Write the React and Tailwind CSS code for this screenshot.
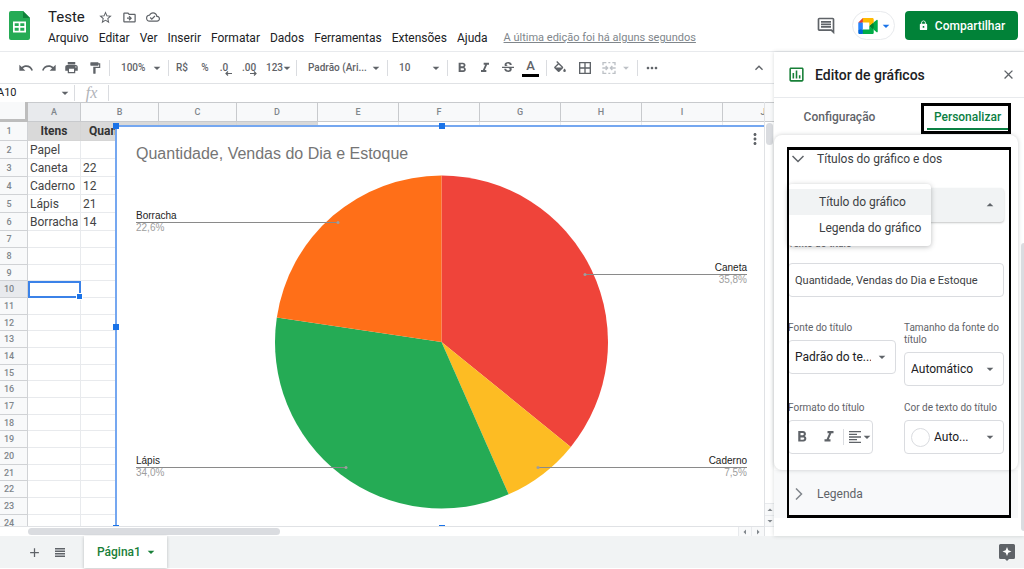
import {
  MdAdd,
  MdArrowDropDown,
  MdArrowDropUp,
  MdBorderAll,
  MdClose,
  MdExpandLess,
  MdFormatAlignLeft,
  MdFormatBold,
  MdFormatItalic,
  MdFormatPaint,
  MdLock,
  MdMoreHoriz,
  MdMoreVert,
  MdOutlineCloudDone,
  MdOutlineDriveFileMove,
  MdOutlineInsertChart,
  MdOutlineInsertComment,
  MdPrint,
  MdRedo,
  MdStarBorder,
  MdStrikethroughS,
  MdUndo,
} from 'react-icons/md'

const MENUS = ['Arquivo', 'Editar', 'Ver', 'Inserir', 'Formatar', 'Dados', 'Ferramentas', 'Extensões', 'Ajuda']

const COLUMNS = [
  { name: 'A', width: 'w-[53px]' },
  { name: 'B', width: 'w-[78px]' },
  { name: 'C', width: 'w-[78px]' },
  { name: 'D', width: 'w-[81px]' },
  { name: 'E', width: 'w-[81px]' },
  { name: 'F', width: 'w-[81px]' },
  { name: 'G', width: 'w-[81px]' },
  { name: 'H', width: 'w-[81px]' },
  { name: 'I', width: 'w-[81px]' },
  { name: 'J', width: 'w-[81px]' },
]

const CELLS = [
  ['Itens', 'Quantidade', '', ''],
  ['Papel', ''],
  ['Caneta', '22'],
  ['Caderno', '12'],
  ['Lápis', '21'],
  ['Borracha', '14'],
]

const ROWS = Array.from({ length: 24 }, (_, i) => i + 1)

const SLICES = [
  { name: 'Caneta', value: 19, color: '#ef443a' },
  { name: 'Caderno', value: 4, color: '#fdbc23' },
  { name: 'Lápis', value: 18, color: '#25ab55' },
  { name: 'Borracha', value: 12, color: '#ff6f18' },
]

const CALLOUTS = [
  { name: 'Borracha', percent: '22,6%', x: 21, y: 97, dot: 223, anchor: 'start' },
  { name: 'Caneta', percent: '35,8%', x: 632, y: 149, dot: 470, anchor: 'end' },
  { name: 'Lápis', percent: '34,0%', x: 21, y: 342, dot: 231, anchor: 'start' },
  { name: 'Caderno', percent: '7,5%', x: 632, y: 342, dot: 423, anchor: 'end' },
]

const CENTER = { x: 326.5, y: 217, r: 166.5 }

function rowHeight(row) {
  if (row === 1) return 'h-[19px]'
  if (row <= 6) return 'h-[18px]'
  return row % 3 === 0 ? 'h-[16px]' : 'h-[17px]'
}

function slicePaths() {
  const total = SLICES.reduce((sum, s) => sum + s.value, 0)
  const point = (t) => {
    const a = t * 2 * Math.PI
    return `${CENTER.x + CENTER.r * Math.sin(a)} ${CENTER.y - CENTER.r * Math.cos(a)}`
  }
  let start = 0
  return SLICES.map((s) => {
    const end = start + s.value / total
    const large = end - start > 0.5 ? 1 : 0
    const d = `M${CENTER.x} ${CENTER.y}L${point(start)}A${CENTER.r} ${CENTER.r} 0 ${large} 1 ${point(end)}Z`
    start = end
    return { ...s, d }
  })
}

function SheetsLogo() {
  return (
    <svg viewBox="0 0 21 29" className="h-[29px] w-[21px] shrink-0">
      <path d="M2 0h12l7 7v20a2 2 0 0 1-2 2H2a2 2 0 0 1-2-2V2a2 2 0 0 1 2-2z" fill="#25ab55" />
      <path d="M14 0l7 7h-7z" fill="#11823b" />
      <path
        d="M4 10.5h13v11H4zM5.7 12.2v2.9h4v-2.9zM11.3 12.2v2.9h4v-2.9zM5.7 16.8v2.9h4v-2.9zM11.3 16.8v2.9h4v-2.9z"
        fill="#fff"
        fillRule="evenodd"
      />
    </svg>
  )
}

function MeetLogo() {
  return (
    <svg viewBox="0 0 87.5 72" className="h-4 w-5">
      <path fill="#00832d" d="M49.5 36l8.53 9.75 11.47 7.33 2-17.02-2-16.64-11.69 6.44z" />
      <path fill="#0066da" d="M0 51.5V66c0 3.315 2.685 6 6 6h14.5l3-10.96-3-9.54-9.95-3z" />
      <path fill="#e94235" d="M20.5 0L0 20.5l10.55 3 9.95-3 2.95-9.41z" />
      <path fill="#2684fc" d="M20.5 20.5H0v31h20.5z" />
      <path
        fill="#00ac47"
        d="M82.6 8.68L69.5 19.42v33.66l13.16 10.79c1.97 1.54 4.85.135 4.85-2.37V11c0-2.535-2.945-3.925-4.91-2.32zM49.5 36v15.5h-29V72h43c3.315 0 6-2.685 6-6V53.08z"
      />
      <path fill="#ffba00" d="M63.5 0h-43v20.5h29V36l20-16.57V6c0-3.315-2.685-6-6-6z" />
    </svg>
  )
}

function FillIcon() {
  return (
    <svg viewBox="0 0 24 20" className="h-[13px] w-4" fill="currentColor">
      <path d="M16.56 8.94L7.62 0 6.21 1.41l2.38 2.38-5.15 5.15a1.49 1.49 0 0 0 0 2.12l5.5 5.5c.29.29.68.44 1.06.44s.77-.15 1.06-.44l5.5-5.5c.59-.58.59-1.53 0-2.12zM5.21 10L10 5.21 14.79 10H5.21zM19 11.5s-2 2.17-2 3.5a2 2 0 1 0 4 0c0-1.33-2-3.5-2-3.5z" />
    </svg>
  )
}

function MergeIcon() {
  return (
    <svg viewBox="0 0 24 24" className="size-4" fill="none" stroke="currentColor" strokeWidth="2">
      <path d="M3 8V4h5M11 4h3M17 4h4v4M3 16v4h5M11 20h3M17 20h4v-4M2 12h7M22 12h-7M7 9l3 3-3 3M17 9l-3 3 3 3" />
    </svg>
  )
}

function DecimalArrow({ flip }) {
  return (
    <svg viewBox="0 0 8 5" className="absolute -right-px -bottom-px h-[5px] w-2" stroke="currentColor" strokeWidth="1.2" fill="none">
      <path d={flip ? 'M1 2.5h6M5 .5l2 2-2 2' : 'M7 2.5H1M3 .5l-2 2 2 2'} />
    </svg>
  )
}

function Divider() {
  return <span className="h-4 w-px shrink-0 bg-[#dadce0]" />
}

function ToolButton({ label, width = 'w-[23px]', children }) {
  return (
    <button aria-label={label} className={`flex h-6 shrink-0 items-center justify-center ${width}`}>
      {children}
    </button>
  )
}

function ToolSelect({ label, value, width }) {
  return (
    <div className={`relative flex shrink-0 items-center ${width}`}>
      <select aria-label={label} className="w-full appearance-none pl-[11px] outline-none">
        <option>{value}</option>
      </select>
      <MdArrowDropDown className="pointer-events-none absolute right-[3px] size-4" />
    </div>
  )
}

function Header() {
  return (
    <header className="flex h-[52px] shrink-0 items-start border-b border-[#e8eaed] pl-[9px] pr-[6px] pt-[11px]">
      <SheetsLogo />
      <div className="-mt-[3px] ml-[18px]">
        <div className="flex h-[18px] items-center text-[#5f6368]">
          <h1 className="mr-[13px] text-[15px] leading-[18px] text-[#202124]">Teste</h1>
          <div className="flex gap-[9px]">
            <button aria-label="Marcar com estrela"><MdStarBorder className="size-[15px]" /></button>
            <button aria-label="Mover"><MdOutlineDriveFileMove className="size-[15px]" /></button>
            <button aria-label="Salvo no Drive"><MdOutlineCloudDone className="size-[14px]" /></button>
          </div>
        </div>
        <nav className="mt-1 flex gap-[10px] whitespace-nowrap text-[12px] leading-4 text-[#202124]">
          {MENUS.map((menu) => (
            <button key={menu}>{menu}</button>
          ))}
          <a href="#historico" className="ml-[6px] text-[11px] text-[#80868b] underline">
            A última edição foi há alguns segundos
          </a>
        </nav>
      </div>
      <div className="ml-auto flex h-[29px] items-center">
        <button aria-label="Comentários" className="mr-4 text-[#5f6368]">
          <MdOutlineInsertComment className="size-5" />
        </button>
        <button
          aria-label="Videochamada"
          className="mr-[10px] flex h-[29px] w-[43px] items-center justify-center rounded-full border border-[#e8eaed]"
        >
          <MeetLogo />
          <MdArrowDropDown className="-mr-1 size-4 text-[#1a73e8]" />
        </button>
        <button className="flex h-[29px] w-[113px] items-center justify-center gap-[6px] rounded bg-[#018238] text-[12px] font-medium text-white">
          <MdLock className="size-[11px]" />
          Compartilhar
        </button>
      </div>
    </header>
  )
}

function Toolbar() {
  return (
    <div className="flex h-8 shrink-0 items-center border-b border-[#e0e2e5] pl-[14px] text-[10px] font-medium text-[#5f6368]">
      <ToolButton label="Desfazer"><MdUndo className="size-4" /></ToolButton>
      <ToolButton label="Refazer"><MdRedo className="size-4" /></ToolButton>
      <ToolButton label="Imprimir"><MdPrint className="size-[15px]" /></ToolButton>
      <ToolButton label="Pintar formatação"><MdFormatPaint className="size-[14px]" /></ToolButton>
      <span className="w-[3px]" />
      <Divider />
      <ToolSelect label="Zoom" value="100%" width="w-[58px]" />
      <Divider />
      <ToolButton label="Moeda" width="w-[26px]">R$</ToolButton>
      <ToolButton label="Porcentagem" width="w-5">%</ToolButton>
      <ToolButton label="Diminuir casas decimais" width="w-[22px]">
        <span className="relative pr-1">.0<DecimalArrow /></span>
      </ToolButton>
      <ToolButton label="Aumentar casas decimais" width="w-6">
        <span className="relative">.00<DecimalArrow flip /></span>
      </ToolButton>
      <ToolButton label="Mais formatos" width="w-[35px]">
        123
        <MdArrowDropDown className="-mx-1 size-4" />
      </ToolButton>
      <Divider />
      <ToolSelect label="Fonte" value="Padrão (Ari..." width="w-[90px]" />
      <Divider />
      <ToolSelect label="Tamanho da fonte" value="10" width="w-[59px]" />
      <Divider />
      <span className="w-[2px]" />
      <ToolButton label="Negrito"><MdFormatBold className="size-4" /></ToolButton>
      <ToolButton label="Itálico"><MdFormatItalic className="size-4" /></ToolButton>
      <ToolButton label="Tachado"><MdStrikethroughS className="size-4" /></ToolButton>
      <ToolButton label="Cor do texto">
        <span className="w-[17px] border-b-[3px] border-black text-center text-[13px] leading-4">A</span>
      </ToolButton>
      <span className="w-1" />
      <Divider />
      <ToolButton label="Cor de preenchimento" width="w-[25px]"><FillIcon /></ToolButton>
      <ToolButton label="Bordas" width="w-[25px]"><MdBorderAll className="size-4" /></ToolButton>
      <button aria-label="Mesclar células" disabled className="flex w-9 shrink-0 items-center justify-between pl-1 text-[#bdc1c6]">
        <MergeIcon />
        <MdArrowDropDown className="size-[14px]" />
      </button>
      <span className="w-1" />
      <Divider />
      <ToolButton label="Mais" width="w-7"><MdMoreHoriz className="size-4" /></ToolButton>
      <button aria-label="Ocultar menus" className="ml-auto mr-[7px]"><MdExpandLess className="size-4" /></button>
    </div>
  )
}

function FormulaBar() {
  return (
    <div className="flex h-[18px] shrink-0 items-center">
      <div className="flex w-[74px] items-center">
        <input aria-label="Caixa de nome" defaultValue="A10" className="-ml-[3px] w-[60px] text-[11px] text-[#202124] outline-none" />
        <MdArrowDropDown className="size-4 text-[#5f6368]" />
      </div>
      <Divider />
      <label htmlFor="formula" className="w-[33px] text-center font-[Liberation_Serif,serif] text-[16px] leading-4 italic text-[#b0b3b8]">
        fx
      </label>
      <Divider />
      <input id="formula" className="min-w-0 flex-1 px-2 text-[11px] outline-none" />
    </div>
  )
}

function SheetTable() {
  return (
    <table className="w-[804px] table-fixed border-separate border-spacing-0 text-[12px] leading-4 text-[#444]">
      <thead>
        <tr className="h-5 text-[9px] leading-3 text-[#80868b]">
          <th className="w-7 border-r-[3px] border-b-[3px] border-[#bdbdbd] bg-[#f8f9fa] p-0" />
          {COLUMNS.map((col) => (
            <th
              key={col.name}
              className={`border-t border-r border-b border-[#c8cacd] p-0 font-medium ${col.width} ${col.name === 'A' ? 'bg-[#e8eaed]' : 'bg-[#f8f9fa]'}`}
            >
              {col.name}
            </th>
          ))}
        </tr>
      </thead>
      <tbody>
        {ROWS.map((row) => (
          <tr key={row} className={rowHeight(row)}>
            <th
              className={`border-r border-b border-[#d0d2d5] p-0 pr-[9px] text-center text-[9px] leading-3 font-medium text-[#80868b] ${row === 10 ? 'bg-[#e8eaed]' : 'bg-[#f8f9fa]'}`}
            >
              {row}
            </th>
            {COLUMNS.map((col, i) => {
              const text = CELLS[row - 1]?.[i]
              const selected = row === 10 && col.name === 'A'
              return (
                <td
                  key={col.name}
                  className={`overflow-visible border-r border-b p-0 whitespace-nowrap ${
                    row === 1 && i < 4
                      ? 'border-[#d5d5d5] bg-[#d9d9d9] px-2 text-center font-bold text-[#333]'
                      : 'border-[#e8eaed] px-[2px]'
                  } ${selected ? 'relative outline-2 -outline-offset-2 outline-[#3b82e8]' : ''}`}
                >
                  {text}
                  {selected && <span className="absolute -right-[2px] -bottom-[2px] size-[5px] bg-[#1a73e8] ring-1 ring-white" />}
                </td>
              )
            })}
          </tr>
        ))}
      </tbody>
    </table>
  )
}

function PieChart() {
  return (
    <div className="absolute top-[23px] left-[115px] h-[404px] w-[653px] border-2 border-[#75a7f0] bg-white">
      <svg viewBox="2 2 649 400" className="block h-full w-full" fontFamily="Liberation Sans, Arial, sans-serif">
        <text x="21" y="34" fontSize="16" fill="#757575">
          Quantidade, Vendas do Dia e Estoque
        </text>
        {slicePaths().map((s) => (
          <path key={s.name} d={s.d} fill={s.color} />
        ))}
        {CALLOUTS.map((c) => (
          <g key={c.name} fontSize="10" textAnchor={c.anchor}>
            <path d={`M${c.x} ${c.y + 0.5}H${c.dot}`} stroke="#8a8a8a" />
            <circle cx={c.dot} cy={c.y + 0.5} r="1.5" fill="#9e9e9e" />
            <text x={c.x} y={c.y - 3} fill="#222">{c.name}</text>
            <text x={c.x} y={c.y + 9} fill="#9e9e9e">{c.percent}</text>
          </g>
        ))}
      </svg>
      <button aria-label="Opções do gráfico" className="absolute top-[3px] right-[2px] text-[#5f6368]">
        <MdMoreVert className="size-[18px]" />
      </button>
      <span className="absolute -top-1 -left-1 size-[6px] bg-[#1a73e8]" />
      <span className="absolute -top-1 left-1/2 -ml-[3px] size-[6px] bg-[#1a73e8]" />
      <span className="absolute top-1/2 -left-1 -mt-[3px] size-[6px] bg-[#1a73e8]" />
      <span className="absolute -bottom-1 left-1/2 -ml-[3px] size-[6px] bg-[#1a73e8]" />
      <span className="absolute -bottom-1 -left-1 size-[6px] bg-[#1a73e8]" />
    </div>
  )
}

function Sheet() {
  return (
    <div className="flex min-h-0 flex-1">
      <div className="flex min-w-0 flex-1 flex-col">
        <div className="relative min-h-0 flex-1 overflow-hidden border-b border-[#e0e2e5]">
          <SheetTable />
          <PieChart />
        </div>
        <div className="flex h-[9px] shrink-0 items-center justify-between pl-7 text-[#80868b]">
          <span className="h-[7px] w-[252px] rounded-full bg-[#dadce0]" />
          <div className="flex h-full w-[26px]">
            <button aria-label="Rolar para a esquerda" className="flex flex-1 items-center justify-center border-l border-[#e8eaed] bg-[#f8f9fa]">
              <MdArrowDropDown className="size-3 rotate-90" />
            </button>
            <button aria-label="Rolar para a direita" className="flex flex-1 items-center justify-center border-l border-[#e8eaed] bg-[#f8f9fa]">
              <MdArrowDropDown className="size-3 -rotate-90" />
            </button>
          </div>
        </div>
      </div>
      <div className="flex w-[10px] shrink-0 flex-col border-l border-[#e0e2e5] pb-[9px] text-[#80868b]">
        <div className="h-5 border-t border-b border-[#c8cacd] bg-[#f8f9fa]" />
        <span className="mt-px ml-px h-[22px] w-[7px] rounded-full bg-[#dadce0]" />
        <button aria-label="Rolar para cima" className="mt-auto flex h-3 items-center justify-center border-t border-[#e8eaed] bg-[#f8f9fa]">
          <MdArrowDropUp className="size-3 shrink-0" />
        </button>
        <button aria-label="Rolar para baixo" className="flex h-3 items-center justify-center border-y border-[#e8eaed] bg-[#f8f9fa]">
          <MdArrowDropDown className="size-3 shrink-0" />
        </button>
      </div>
    </div>
  )
}

function FieldSelect({ id, label, value, swatch }) {
  return (
    <div>
      <label htmlFor={id} className="mb-[6px] block text-[10px] leading-3 text-[#5f6368]">
        {label}
      </label>
      <div className="relative flex h-[34px] items-center">
        <select
          id={id}
          className={`h-full w-full appearance-none rounded border border-[#dadce0] bg-white pr-6 text-[12px] text-[#202124] outline-none ${swatch ? 'pl-[29px]' : 'pl-[6px]'}`}
        >
          <option>{value}</option>
        </select>
        {swatch && <span className="pointer-events-none absolute left-[7px] size-[19px] rounded-full border border-[#dadce0]" />}
        <MdArrowDropDown className="pointer-events-none absolute right-[6px] size-4 text-[#5f6368]" />
      </div>
    </div>
  )
}

function TitleSection() {
  return (
    <section className="relative rounded-lg bg-white px-[14px] pb-4 shadow-[0_0_4px_rgba(60,64,67,0.25)]">
      <button className="flex h-12 w-full items-center text-[12px] text-[#3c4043]">
        <svg viewBox="0 0 12 8" className="ml-[4px] mr-[13px] h-2 w-3" fill="none" stroke="#5f6368" strokeWidth="1.5">
          <path d="M.5 1L6 6.5 11.5 1" />
        </svg>
        Títulos do gráfico e dos
      </button>

      <div className="relative mt-[5px]">
        <select
          aria-label="Tipo de título"
          className="block h-[34px] w-full appearance-none rounded bg-[#f1f3f4] pl-2 text-[12px] shadow-[0_1px_2px_rgba(60,64,67,0.3)] outline-none"
        >
          <option>Título do gráfico</option>
        </select>
        <MdArrowDropUp className="pointer-events-none absolute top-[9px] right-[6px] size-4 text-[#5f6368]" />
        <ul
          role="listbox"
          aria-label="Tipo de título"
          className="absolute -top-1 left-0 z-10 w-[143px] rounded bg-white py-[5px] text-[12px] text-[#3c4043] shadow-[0_1px_5px_rgba(60,64,67,0.35)]"
        >
          <li role="option" aria-selected="true" className="flex h-[26px] items-center bg-[#f1f3f4] pl-[31px]">
            Título do gráfico
          </li>
          <li role="option" aria-selected="false" className="flex h-[26px] items-center pl-[31px]">
            Legenda do gráfico
          </li>
        </ul>
      </div>

      <label htmlFor="titulo" className="mt-4 block text-[10px] leading-3 text-[#5f6368]">
        Texto do título
      </label>
      <input
        id="titulo"
        defaultValue="Quantidade, Vendas do Dia e Estoque"
        className="mt-[13px] block h-[34px] w-full rounded border border-[#dadce0] px-[6px] text-[11px] text-[#3c4043] outline-none"
      />

      <div className="mt-[25px] grid grid-cols-[minmax(0,1fr)_100px] items-start gap-x-2 gap-y-4">
        <FieldSelect id="fonte" label="Fonte do título" value="Padrão do te..." />
        <FieldSelect id="tamanho" label="Tamanho da fonte do título" value="Automático" />
        <fieldset>
          <legend className="mb-[6px] text-[10px] leading-3 text-[#5f6368]">Formato do título</legend>
          <div className="flex h-[34px] w-[85px] items-center rounded border border-[#dadce0] text-[#5f6368]">
            <ToolButton label="Título em negrito" width="w-[26px]"><MdFormatBold className="size-[18px]" /></ToolButton>
            <ToolButton label="Título em itálico" width="w-[28px]"><MdFormatItalic className="size-[18px]" /></ToolButton>
            <Divider />
            <ToolButton label="Alinhamento do título" width="w-[29px]">
              <MdFormatAlignLeft className="size-4 shrink-0" />
              <MdArrowDropDown className="-mx-1 size-4 shrink-0" />
            </ToolButton>
          </div>
        </fieldset>
        <FieldSelect id="cor" label="Cor de texto do título" value="Auto..." swatch />
      </div>
    </section>
  )
}

function ChartEditor() {
  return (
    <aside className="relative flex w-[250px] shrink-0 flex-col bg-white shadow-[0_0_4px_rgba(60,64,67,0.2)]">
      <div className="flex h-[46px] shrink-0 items-center border-b border-[#e8eaed] pl-[13px] pr-2">
        <MdOutlineInsertChart className="size-[19px] text-[#188038]" />
        <h2 className="ml-[9px] text-[14px] leading-5 font-medium text-[#202124]">Editor de gráficos</h2>
        <button aria-label="Fechar" className="ml-auto text-[#5f6368]"><MdClose className="size-[15px]" /></button>
      </div>
      <div role="tablist" className="flex h-[37px] shrink-0 pr-[13px] text-[12px] font-medium text-[#5f6368]">
        <button role="tab" aria-selected="false" className="flex-1 pr-4">Configuração</button>
        <div className="mt-[5px] h-[31px] w-[90px] shrink-0 border-[3px] border-black pb-px pl-[3px]">
          <button role="tab" aria-selected="true" className="h-full w-full border-b-2 border-[#0b8043] text-[#0b8043]">
            Personalizar
          </button>
        </div>
      </div>
      <div className="mr-[6px] min-h-0 flex-1">
        <TitleSection />
        <button className="flex h-12 w-full items-center bg-[#f8f9fa] pl-[14px] text-[12px] text-[#5f6368]">
          <svg viewBox="0 0 8 12" className="ml-[7px] mr-[14px] h-3 w-2" fill="none" stroke="#80868b" strokeWidth="1.5">
            <path d="M1 .5L6.5 6 1 11.5" />
          </svg>
          Legenda
        </button>
      </div>
      <span className="absolute right-0 bottom-[5px] h-[288px] w-[3px] rounded-l bg-[#dadce0]" />
      {/* Highlight frame around the options */}
      <div className="pointer-events-none absolute top-[95px] right-[13px] left-[13px] z-20 h-[371px] border-[3px] border-r-2 border-l-2 border-black" />
    </aside>
  )
}

function Footer() {
  return (
    <footer className="flex h-8 shrink-0 items-stretch bg-[#f1f3f4] pl-[27px] pr-[9px] text-[#5f6368]">
      <button aria-label="Adicionar página"><MdAdd className="size-[15px]" /></button>
      <button aria-label="Todas as páginas" className="ml-[13px]">
        <svg viewBox="0 0 10 9" className="h-[9px] w-[10px]" fill="currentColor">
          <path d="M0 0h10v1.5H0zM0 2.5h10V4H0zM0 5h10v1.500H0zM0 7.5h10V9H0z" />
        </svg>
      </button>
      <button className="ml-[19px] flex w-[83px] items-center bg-white pl-[13px] text-[12px] font-medium text-[#188038] shadow-[0_1px_3px_rgba(60,64,67,0.3)]">
        Página1
        <MdArrowDropDown className="ml-[2px] size-4" />
      </button>
      <button aria-label="Explorar" className="ml-auto">
        <svg viewBox="0 0 16 17" className="h-[17px] w-4">
          <path d="M1.5 0h13A1.5 1.5 0 0 1 16 1.5v12a1.5 1.5 0 0 1-1.5 1.5H10l-2 2-2-2H1.5A1.5 1.5 0 0 1 0 13.5v-12A1.5 1.5 0 0 1 1.5 0z" fill="#5f6368" />
          <path d="M8 3l1.300 3.200L12.500 7.500 9.300 8.800 8 12 6.700 8.800 3.500 7.500l3.200-1.300z" fill="#fff" />
        </svg>
      </button>
    </footer>
  )
}

export default function App() {
  return (
    <div className="flex h-screen flex-col overflow-hidden bg-white pb-px font-[Roboto,sans-serif]">
      <Header />
      <main className="flex min-h-0 flex-1">
        <div className="flex min-w-0 flex-1 flex-col">
          <Toolbar />
          <FormulaBar />
          <Sheet />
        </div>
        <ChartEditor />
      </main>
      <Footer />
    </div>
  )
}
